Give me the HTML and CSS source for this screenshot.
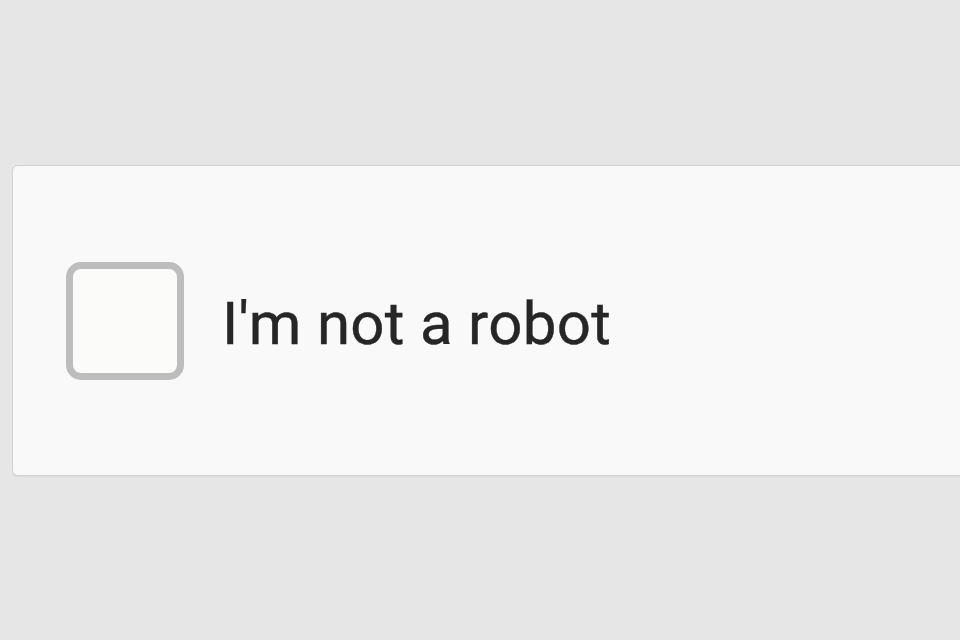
FILE: index.html
```html
<!DOCTYPE html>
<html lang="en">
<head>
  <meta charset="UTF-8">
  <meta name="viewport" content="width=device-width, initial-scale=1.0">
  <title>reCAPTCHA</title>
  <link rel="stylesheet" href="styles.css">
</head>
<body>

  <div class="captcha">
    <div class="checkbox"></div>
    <span class="label">I'm not a robot</span>
  </div>

</body>
</html>
```

FILE: styles.css
```css
html, body {
  overflow: hidden;
}
body {
  font-family: Roboto, 'Liberation Sans', Arial, sans-serif;
  margin: 0;
  padding: 0;
  background-color: #e6e6e6;
  height: 100vh;
}
.captcha {
  margin: 165px 0 0 12px;
  width: 1000px;
  height: 309px;
  background-color: #f9f9f9;
  border: 1px solid #d3d3d3;
  border-radius: 6px;
  box-shadow: 0 1px 1px rgba(0, 0, 0, 0.06);
  display: flex;
  align-items: center;
  padding-left: 53px;
  box-sizing: content-box;
}
.checkbox {
  width: 104px;
  height: 104px;
  border: 7px solid #bdbdbd;
  border-radius: 15px;
  background-color: #fbfbf9;
  flex-shrink: 0;
}
.label {
  margin-left: 38px;
  font-size: 60px;
  letter-spacing: 0.3px;
  color: #262626;
  -webkit-text-stroke: 0.4px #262626;
  margin-top: 6px;
}
```
